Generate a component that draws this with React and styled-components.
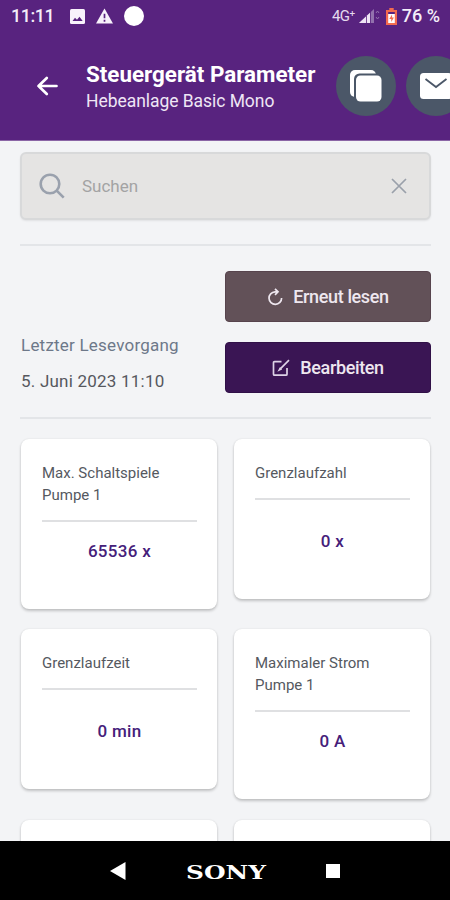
import React from 'react'
import styled, { createGlobalStyle } from 'styled-components'

const GlobalStyle = createGlobalStyle`
  * {
    box-sizing: border-box;
  }

  body {
    margin: 0;
    font-family: Roboto, 'Liberation Sans', sans-serif;
    background: #f3f4f6;
  }
`

const Screen = styled.div`
  width: 450px;
  height: 900px;
  display: flex;
  flex-direction: column;
  overflow: hidden;
`

const Header = styled.header`
  flex: 0 0 141px;
  background: #58237f;
  border-bottom: 1px solid #8b66a6;
  color: #fff;
  overflow: hidden;
`

const StatusBar = styled.div`
  height: 32px;
  display: flex;
  align-items: center;
  justify-content: space-between;
  padding: 0 10px 0 11px;
`

const StatusGroup = styled.div`
  display: flex;
  align-items: center;
  gap: ${({ $gap }) => $gap}px;
`

const StatusText = styled.span`
  font-size: 18px;
  font-weight: 500;
  line-height: 32px;
  letter-spacing: ${({ $spacing = 0 }) => $spacing}px;
  color: #f4edf8;
`

const Network = styled.span`
  font-size: 15px;
  line-height: 32px;
  letter-spacing: -0.6px;
  color: #e5d9ee;
`

const TitleBar = styled.div`
  height: 107px;
  width: 480px;
  display: flex;
  align-items: center;
  padding-left: 36px;
`

const Titles = styled.div`
  width: 250px;
  margin: 3px 0 0 28px;
  white-space: nowrap;
`

const Title = styled.h1`
  margin: 0;
  font-size: 22.4px;
  line-height: 28px;
  font-weight: 700;
`

const Subtitle = styled.p`
  margin: 0;
  font-size: 17.5px;
  line-height: 27px;
  letter-spacing: -0.05px;
  color: #efe6f5;
`

const RoundButton = styled.button`
  flex: none;
  width: 60px;
  height: 60px;
  padding: 0;
  margin-right: 10px;
  border: 0;
  border-radius: 50%;
  background: #4b5768;
  display: flex;
  align-items: center;
  justify-content: center;
`

const Content = styled.main`
  flex: 1;
  min-height: 0;
  overflow: hidden;
  padding: 11px 19px 0 20px;
`

const Search = styled.div`
  height: 68px;
  display: flex;
  align-items: center;
  padding: 0 22px 0 17px;
  border: 2px solid #d8d9da;
  border-radius: 6px;
  background: #e5e4e3;
  box-shadow: 0 1px 2px rgba(0, 0, 0, 0.08);
`

const Placeholder = styled.span`
  flex: 1;
  margin-left: 17px;
  font-size: 17px;
  color: #a3a3a4;
`

const Divider = styled.div`
  height: 2px;
  background: #e3e5e8;
`

const SearchDivider = styled(Divider)`
  margin-top: 24px;
`

const ReadSection = styled.section`
  display: flex;
  justify-content: space-between;
  align-items: flex-end;
  margin: 25px 0 24px;
`

const LastRead = styled.div`
  display: flex;
  flex-direction: column;
  gap: 12px;
  padding-left: 1px;
  white-space: nowrap;
`

const ReadText = styled.span`
  font-size: 17px;
  line-height: 24px;
  color: ${({ $color }) => $color};
  letter-spacing: 0.22px;
`

const Actions = styled.div`
  width: 206px;
  display: flex;
  flex-direction: column;
  gap: 20px;
`

const ActionButton = styled.button`
  height: 51px;
  padding: 0;
  display: flex;
  align-items: center;
  justify-content: center;
  gap: 10px;
  border: 1px solid ${({ $border }) => $border};
  border-radius: 4px;
  background: ${({ $bg }) => $bg};
  color: #eee7ef;
  font-family: inherit;
  font-size: 18px;
  font-weight: 500;
  letter-spacing: -0.37px;
`

const Grid = styled.section`
  display: grid;
  grid-template-columns: 196px 196px;
  column-gap: 17px;
  row-gap: 20.4px;
  align-items: start;
  padding-left: 1px;
  margin-top: 20px;
`

const Card = styled.article`
  min-height: 160px;
  display: flex;
  flex-direction: column;
  padding: 22.5px 20px 46.5px 21px;
  border-radius: 8px;
  background: #fff;
  box-shadow: 0 2px 3px rgba(0, 0, 0, 0.2), 0 0 2px rgba(0, 0, 0, 0.1);
`

const CardTitle = styled.h2`
  margin: 0 0 13.5px;
  font-size: 15px;
  line-height: 22.5px;
  font-weight: 400;
  color: #55595f;
  white-space: pre-line;
`

const CardDivider = styled(Divider)`
  flex: none;
  background: #dfe0e2;
`

const Value = styled.div`
  margin-top: auto;
  padding-top: 17.5px;
  text-align: center;
  font-size: 17px;
  line-height: 23px;
  font-weight: 500;
  letter-spacing: 0.3px;
  color: #45207a;
`

const NavBar = styled.nav`
  flex: 0 0 59px;
  display: flex;
  align-items: center;
  padding-left: 110px;
  background: #000;
  color: #fff;
`

const Brand = styled.span`
  width: 80px;
  margin: 4px 60px 0;
  display: flex;
  justify-content: center;
  font-family: 'DejaVu Serif', serif;
  font-size: 18.5px;
  line-height: 24px;
  font-weight: 700;
  transform: scaleX(1.34);
`

const Square = styled.span`
  width: 14px;
  height: 14px;
  background: #fff;
`

const parameters = [
  { title: 'Max. Schaltspiele\nPumpe 1', value: '65536 x' },
  { title: 'Grenzlaufzahl', value: '0 x' },
  { title: 'Grenzlaufzeit', value: '0 min' },
  { title: 'Maximaler Strom\nPumpe 1', value: '0 A' },
  { title: '', value: '' },
  { title: '', value: '' }
]

const ImageIcon = () => (
  <svg width='15' height='15' viewBox='0 0 15 15'>
    <rect width='15' height='15' rx='1.5' fill='#f8f2fb' />
    <path d='M2.5 12 5 8.7l2 2 2.5-3 3.2 4.3z' fill='#58237f' />
  </svg>
)

const WarningIcon = () => (
  <svg width='17' height='16' viewBox='0 0 18 16'>
    <path d='M9 0 18 16H0z' fill='#f8f2fb' />
    <path d='M9 5.5v5M9 12v2' stroke='#58237f' strokeWidth='1.8' />
  </svg>
)

const NotificationDot = () => (
  <svg width='20' height='20'>
    <circle cx='10' cy='10' r='10' fill='#fff' />
  </svg>
)

const SignalIcon = () => (
  <svg width='22' height='16' viewBox='0 0 22 16'>
    <path d='M0 15 15 1v14z' fill='#9271ad' />
    <path d='M0 15 11 4.7V15z' fill='#eee4f4' />
    <path d='M7.5 8v7M11.5 4v11' stroke='#58237f' strokeWidth='0.8' />
    <path d='M17 5l1.5-2L20 5M17 9l1.5 2L20 9' fill='none' stroke='#9271ad' />
  </svg>
)

const BatteryIcon = () => (
  <svg width='11' height='17' viewBox='0 0 10 17' preserveAspectRatio='none'>
    <path d='M3 0h4v2h3v15H0V2h3z' fill='#f36b4f' />
    <path d='M2 4h6v2H2z' fill='#58237f' />
    <path d='M2 6h6v9H2z' fill='#fff' />
    <path d='M5.5 6.5 3 11h1.8v3L7.2 9.5H5.5z' fill='#f36b4f' />
  </svg>
)

const BackIcon = () => (
  <svg width='22' height='20' viewBox='0 0 22 20' fill='none' stroke='#fff' strokeWidth='2.7'>
    <path d='M10.8 2 2.5 10l8.3 8M2.5 10H20.5' strokeLinejoin='round' strokeLinecap='round' />
  </svg>
)

const CopyIcon = () => (
  <svg width='34' height='34' viewBox='0 0 34 34'>
    <rect x='1' y='1' width='26' height='27' rx='5' fill='#fff' />
    <rect x='5' y='4.5' width='28.5' height='29' rx='5.5' fill='#4b5768' />
    <rect x='7' y='6.5' width='25.5' height='26' rx='4.5' fill='#fff' />
  </svg>
)

const MailIcon = () => (
  <svg width='34' height='26' viewBox='0 0 34 26'>
    <rect x='1' width='32' height='26' rx='3.5' fill='#fff' />
    <path d='M6.5 6 17 14 27.5 6' fill='none' stroke='#4b5768' strokeWidth='1.8' />
  </svg>
)

const SearchIcon = () => (
  <svg width='26' height='26' viewBox='0 0 26 26' fill='none' stroke='#9aa1ad' strokeWidth='2.6'>
    <circle cx='11' cy='11' r='9.3' />
    <path d='m17.7 17.7 7 7' />
  </svg>
)

const CloseIcon = () => (
  <svg width='16' height='16' viewBox='0 0 16 16' fill='none' stroke='#9aa0aa' strokeWidth='1.7'>
    <path d='m1 1 14 14M15 1 1 15' />
  </svg>
)

const ReloadIcon = () => (
  <svg width='16' height='18' viewBox='0 0 16 18' fill='none' stroke='#eee7ef' strokeWidth='1.7'>
    <path d='M10.8 3.8H8A6.3 6.3 0 1 0 14.6 10M8 .8l3 3-3 3' />
  </svg>
)

const EditIcon = () => (
  <svg width='18' height='18' viewBox='0 0 18 18' fill='none' stroke='#ddd2e6' strokeWidth='1.7'>
    <path d='M9.5 2.7H2.5q-1 0-1 1v11.5q0 1 1 1H14q1 0 1-1V9M17 1.2 7.8 10.4' />
    <path d='M8.4 8.5 6.8 11.4l3-1.4' strokeWidth='1.2' />
  </svg>
)

const ParameterCard = ({ title, value }) => (
  <Card>
    <CardTitle>{title}</CardTitle>
    <CardDivider />
    <Value>{value}</Value>
  </Card>
)

const App = () => (
  <Screen>
    <GlobalStyle />
    <Header>
      <StatusBar>
        <StatusGroup $gap={16}>
          <StatusText $spacing={-0.5}>11:11</StatusText>
          <StatusGroup $gap={11}>
            <ImageIcon />
            <WarningIcon />
            <NotificationDot />
          </StatusGroup>
        </StatusGroup>
        <StatusGroup $gap={5}>
          <StatusGroup $gap={4}>
            <Network>4G⁺</Network>
            <SignalIcon />
          </StatusGroup>
          <BatteryIcon />
          <StatusText>76 %</StatusText>
        </StatusGroup>
      </StatusBar>
      <TitleBar>
        <BackIcon />
        <Titles>
          <Title>Steuergerät Parameter</Title>
          <Subtitle>Hebeanlage Basic Mono</Subtitle>
        </Titles>
        <RoundButton><CopyIcon /></RoundButton>
        <RoundButton><MailIcon /></RoundButton>
      </TitleBar>
    </Header>
    <Content>
      <Search>
        <SearchIcon />
        <Placeholder>Suchen</Placeholder>
        <CloseIcon />
      </Search>
      <SearchDivider />
      <ReadSection>
        <LastRead>
          <ReadText $color='#6d7889'>Letzter Lesevorgang</ReadText>
          <ReadText $color='#56585e'>5. Juni 2023 11:10</ReadText>
        </LastRead>
        <Actions>
          <ActionButton $bg='#625158' $border='#57444d'><ReloadIcon />Erneut lesen</ActionButton>
          <ActionButton $bg='#3a1554' $border='#301047'><EditIcon />Bearbeiten</ActionButton>
        </Actions>
      </ReadSection>
      <Divider />
      <Grid>
        {parameters.map((parameter, i) => <ParameterCard key={i} {...parameter} />)}
      </Grid>
    </Content>
    <NavBar>
      <svg width='16' height='18'><path d='M0 9 15.5 0v18z' fill='#fff' /></svg>
      <Brand>SONY</Brand>
      <Square />
    </NavBar>
  </Screen>
)

export default App
